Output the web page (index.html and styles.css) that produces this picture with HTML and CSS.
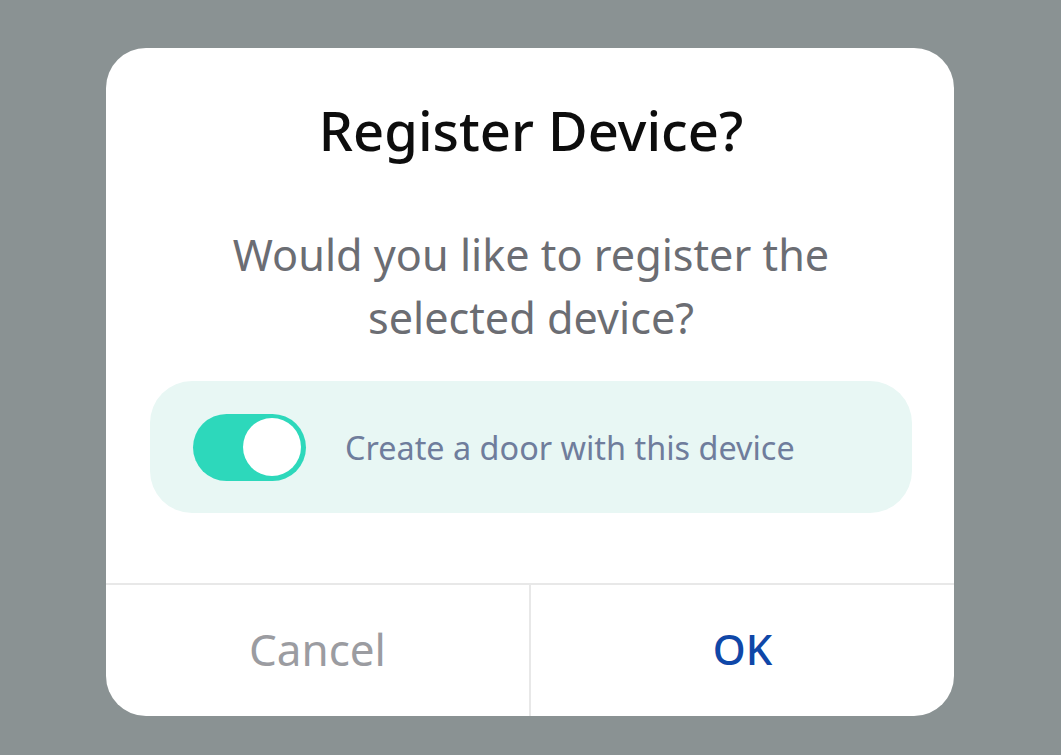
FILE: index.html
```html
<!DOCTYPE html>
<html lang="en">
<head>
<meta charset="utf-8">
<title>Register Device?</title>
<link rel="stylesheet" href="styles.css">
</head>
<body>
<div class="backdrop">
  <div class="dialog">
    <div class="content">
      <h1 class="title">Register Device?</h1>
      <p class="message">Would you like to register the selected device?</p>
      <div class="option">
        <div class="toggle on"><div class="knob"></div></div>
        <span class="option-label">Create a door with this device</span>
      </div>
    </div>
    <div class="actions">
      <button class="btn cancel">Cancel</button>
      <button class="btn ok">OK</button>
    </div>
  </div>
</div>
</body>
</html>
```
FILE: styles.css
```css
html, body {
  margin: 0;
  padding: 0;
  height: 100%;
}
body {
  background: #8a9293;
  font-family: "Noto Sans", "Open Sans", sans-serif;
}
.backdrop {
  padding: 48px 0 0 106px;
}
.dialog {
  width: 848px;
  height: 668px;
  background: #ffffff;
  border-radius: 40px;
  display: flex;
  flex-direction: column;
  overflow: hidden;
}
.content {
  padding: 50px 42px 0 44px;
  display: flex;
  flex-direction: column;
  align-items: stretch;
}
.title {
  margin: 0;
  font-size: 54.3px;
  line-height: 64px;
  font-weight: 500;
  color: #0d0d0d;
  text-align: center;
}
.message {
  margin: 61px 20px 0;
  font-size: 43.2px;
  line-height: 63px;
  color: #6b6d73;
  text-align: center;
}
.option {
  margin-top: 32px;
  height: 132px;
  background: #e8f7f4;
  border-radius: 42px;
  display: flex;
  align-items: center;
  padding-left: 43px;
  gap: 39px;
}
.toggle {
  width: 113px;
  height: 67px;
  border-radius: 34px;
  background: #2dd8bb;
  display: flex;
  align-items: center;
  justify-content: flex-end;
  padding: 0 5px;
  box-sizing: border-box;
}
.knob {
  width: 58px;
  height: 58px;
  border-radius: 50%;
  background: #ffffff;
}
.option-label {
  font-size: 32.4px;
  color: #6f7d9c;
}
.actions {
  margin-top: auto;
  height: 133px;
  border-top: 2px solid #e8e8e8;
  display: flex;
  box-sizing: border-box;
}
.btn {
  flex: 1;
  border: none;
  background: transparent;
  font-family: inherit;
  font-size: 44px;
  padding: 0 0 4px;
}
.cancel {
  color: #9b9ca1;
  border-right: 2px solid #e8e8e8;
}
.ok {
  color: #0f47a8;
  font-weight: 500;
  font-size: 42px;
}
```
